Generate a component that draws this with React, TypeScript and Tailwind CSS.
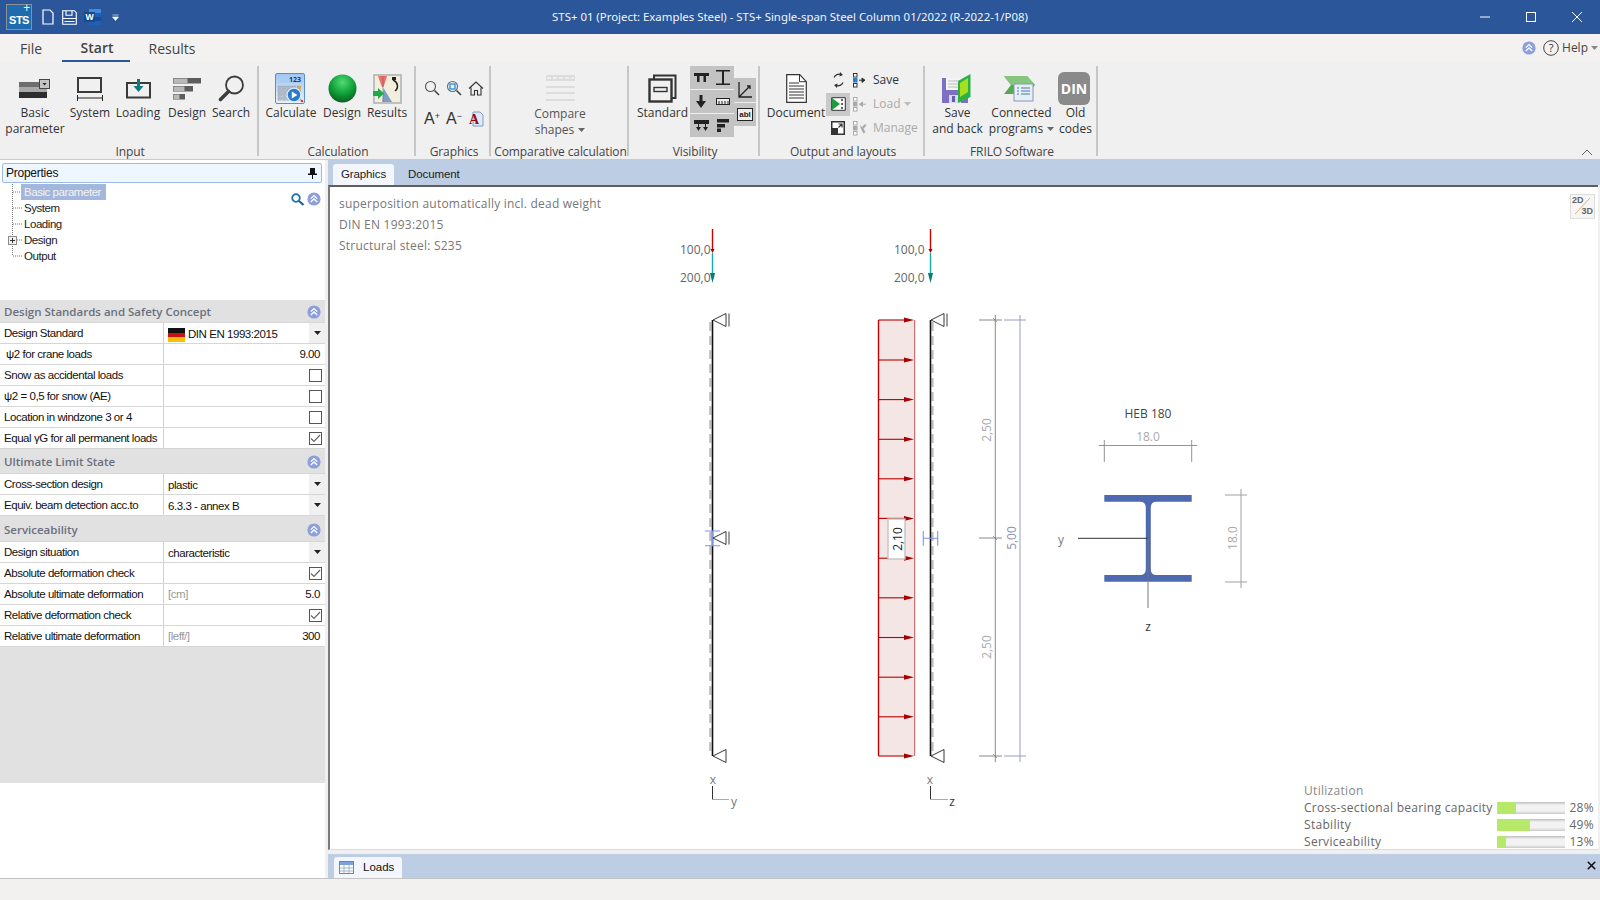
import type { ReactNode } from "react";
import { X } from "lucide-react";

const arrowYs = [320, 360, 399.6, 439.3, 478.8, 518.4, 558.2, 597.8, 637.5, 677.2, 716.8, 756];

function Collapse({ small }: { small?: boolean }) {
  return (
    <svg width={small ? 14 : 15} height={small ? 14 : 15} viewBox="0 0 14 14" className="shrink-0">
      <circle cx="7" cy="7" r="6.6" fill="#8c9fdb" />
      <path d="M3.8 6.6 7 3.6l3.2 3M3.8 10 7 7l3.2 3" fill="none" stroke="#fff" strokeWidth="1.3" />
    </svg>
  );
}

function Caret({ color = "#666" }: { color?: string }) {
  return (
    <svg width="7" height="4" viewBox="0 0 7 4" className="shrink-0">
      <path d="M0 0h7L3.5 4z" fill={color} />
    </svg>
  );
}

function RibbonBtn({ w, icon, children }: { w: number; icon: ReactNode; children: ReactNode }) {
  return (
    <div className="flex flex-col items-center shrink-0" style={{ width: w }}>
      <div className="h-[37px] pt-[4px] flex items-center justify-center">{icon}</div>
      <div className="text-center leading-[16px] whitespace-nowrap">{children}</div>
    </div>
  );
}

function Group({ w, label, children }: { w: number; label: string; children: ReactNode }) {
  return (
    <div className="shrink-0 flex flex-col h-[90px] mt-[4px] border-r-2 border-[#c6c6c6]" style={{ width: w }}>
      <div className="flex h-[79px] shrink-0 pt-[2px]">{children}</div>
      <div className="text-center leading-[14px] pl-[3px] text-[#444] tracking-[-0.1px] whitespace-nowrap">{label}</div>
    </div>
  );
}

function IconBasic() {
  return (
    <svg width="32" height="19" viewBox="0 0 32 19">
      <rect x="0" y="3" width="21" height="5" fill="#6e6e6e" />
      <rect x="0" y="8" width="28" height="5" fill="#a9a9a9" />
      <rect x="0" y="13" width="28" height="6" fill="#2e2e2e" />
      <rect x="20.5" y="0.5" width="10" height="9" fill="#c4c4c4" stroke="#444" />
      <path d="M23.5 4h4l-2 2.5z" fill="#222" />
    </svg>
  );
}

function IconSystem() {
  return (
    <svg width="28" height="24" viewBox="0 0 28 24">
      <rect x="2" y="1" width="23" height="14" fill="none" stroke="#3a3a3a" strokeWidth="2" />
      <path d="M1 21h26M1.5 18v6M26.5 18v6" stroke="#222" fill="none" />
    </svg>
  );
}

function IconLoading() {
  return (
    <svg width="25" height="20" viewBox="0 0 25 20">
      <rect x="1" y="4" width="23" height="14.5" fill="none" stroke="#3a3a3a" strokeWidth="2" />
      <path d="M11 0h3v7h3.5l-5 6-5-6H11z" fill="#0f7a7d" />
    </svg>
  );
}

function IconDesignBars() {
  return (
    <svg width="28" height="22" viewBox="0 0 28 22">
      <rect x="0" y="0" width="28" height="5.5" fill="#5c5c5c" />
      <rect x="0.5" y="0.5" width="14" height="4.5" fill="#b8b8b8" />
      <rect x="0" y="8" width="20" height="5.5" fill="#5c5c5c" />
      <rect x="0.5" y="8.5" width="11" height="4.5" fill="#b8b8b8" />
      <rect x="0" y="16" width="12" height="5.5" fill="#5c5c5c" />
      <rect x="0.5" y="16.5" width="6" height="4.5" fill="#b8b8b8" />
    </svg>
  );
}

function IconSearch() {
  return (
    <svg width="27" height="27" viewBox="0 0 27 27">
      <circle cx="16.5" cy="10" r="8.5" fill="none" stroke="#3d3d3d" strokeWidth="1.8" />
      <path d="M10.5 16.5 2.5 24.5" stroke="#3d3d3d" strokeWidth="3.6" strokeLinecap="round" />
    </svg>
  );
}

function IconCalculate() {
  const keys = [];
  for (let r = 0; r < 4; r++) for (let c = 0; c < 5; c++) keys.push(<rect key={`${r}-${c}`} x={3 + c * 4.8} y={13 + r * 3.8} width="3.6" height="2.8" fill={c === 4 && r < 2 ? "#e6a955" : "#b3bac4"} stroke="#7c8694" strokeWidth="0.3" />);
  return (
    <svg width="30" height="31" viewBox="0 0 30 31">
      <defs>
        <linearGradient id="calcbg" x1="0" y1="0" x2="0" y2="1">
          <stop offset="0" stopColor="#9ec6f0" />
          <stop offset="1" stopColor="#e9f1fa" />
        </linearGradient>
      </defs>
      <rect x="0.5" y="0.5" width="29" height="30" rx="1.5" fill="url(#calcbg)" stroke="#5d8ec8" />
      <rect x="3" y="3" width="24" height="7" fill="#a9cdf2" />
      <text x="26" y="9.3" textAnchor="end" fontSize="7" fontWeight="700" fill="#123a6e">123</text>
      {keys}
      <circle cx="19" cy="22" r="6.8" fill="#2a7ccb" stroke="#d9ecff" strokeWidth="1.2" />
      <path d="M16.8 18.5v7l5.6-3.5z" fill="#fff" />
      <circle cx="27" cy="28" r="1.3" fill="#cf4030" />
    </svg>
  );
}

function IconBall() {
  return (
    <svg width="29" height="29" viewBox="0 0 29 29">
      <defs>
        <radialGradient id="ball" cx="0.5" cy="0.28" r="0.75">
          <stop offset="0" stopColor="#4fdc72" />
          <stop offset="0.55" stopColor="#10a038" />
          <stop offset="1" stopColor="#0a5a22" />
        </radialGradient>
      </defs>
      <circle cx="14.5" cy="14.5" r="14" fill="url(#ball)" />
    </svg>
  );
}

function IconResults() {
  return (
    <svg width="29" height="30" viewBox="0 0 29 30">
      <rect x="1" y="1" width="27" height="28" fill="#f1eedd" stroke="#b3b3b3" strokeWidth="1.6" />
      <path d="M5 2h9l-3.5 11H9z" fill="#f26a6a" />
      <path d="M10.5 14 19 28H9.5z" fill="#7c9cc4" />
      <path d="M10 2v26" stroke="#666" strokeWidth="0.5" />
      <path d="M20 6c5 2 6 8 2 11" fill="none" stroke="#222" strokeWidth="1.5" />
      <path d="M19 3h4v3h-4z" fill="#222" />
      <path d="M0 17h5v-3l6 5.5L5 25v-3H0z" fill="#1eaa4b" />
    </svg>
  );
}

function IconLens({ zoom }: { zoom?: boolean }) {
  return (
    <svg width="16" height="16" viewBox="0 0 16 16">
      <circle cx="6.5" cy="6.5" r="5" fill="none" stroke={zoom ? "#4a6f8c" : "#555"} strokeWidth="1.1" />
      <path d="m10.5 10.5 4.5 4.5" stroke="#444" strokeWidth="1.6" />
      {zoom && <rect x="4" y="4" width="5" height="5" fill="none" stroke="#2a8fd0" strokeWidth="1.3" />}
    </svg>
  );
}

function IconHome() {
  return (
    <svg width="16" height="15" viewBox="0 0 16 15">
      <path d="M1 7.5 8 1l7 6.5M3 6.5V14h3.5V9.5h3V14H13V6.5" fill="none" stroke="#333" strokeWidth="1.1" />
    </svg>
  );
}

function IconFontRed() {
  return (
    <svg width="15" height="16" viewBox="0 0 15 16">
      <path d="M4 1h7l3 3v11H4z" fill="#dfe9f7" stroke="#7d9cc8" />
      <text x="0" y="13" fontSize="14" fontWeight="700" fontFamily="Liberation Serif" fill="#8e1414">A</text>
    </svg>
  );
}

function IconCompare() {
  return (
    <svg width="29" height="26" viewBox="0 0 29 26">
      <rect x="0" y="0" width="29" height="6" fill="#dcdcdc" />
      <path d="M1 3h27" stroke="#fff" strokeDasharray="4 2" />
      <path d="M0 12h29M0 18h29M0 25h29" stroke="#c9c9c9" />
    </svg>
  );
}

function IconStandard() {
  return (
    <svg width="29" height="29" viewBox="0 0 29 29">
      <path d="M6 5V1.5h21.5V24H24" fill="none" stroke="#333" strokeWidth="2" />
      <rect x="1.5" y="5.5" width="22" height="22" fill="none" stroke="#333" strokeWidth="2.4" />
      <rect x="6" y="13.5" width="13" height="4" fill="none" stroke="#333" strokeWidth="1.4" />
    </svg>
  );
}

function VisCell({ children, cls }: { children: ReactNode; cls?: string }) {
  return <div className={`flex-1 flex items-center justify-center ${cls ?? ""}`}>{children}</div>;
}

function IconDocument() {
  return (
    <svg width="21" height="29" viewBox="0 0 21 29">
      <path d="M0.7 0.7h13l6.6 7v20.6H0.7z" fill="#fff" stroke="#333" strokeWidth="1.2" />
      <path d="M13.5 0.7v7h6.8" fill="none" stroke="#333" />
      <path d="M3 9h10M3 12h15M3 15h15M3 18h15M3 21h15M3 24h15" stroke="#333" />
    </svg>
  );
}

function SmallLoadSave({ dis, glyph }: { dis?: boolean; glyph: ReactNode }) {
  const c = dis ? "#a8a8a8" : "#2a80c8";
  return (
    <svg width="15" height="15" viewBox="0 0 15 15" className="shrink-0">
      <rect x="0.5" y="0.5" width="3.5" height="3.5" fill="#fff" stroke={dis ? "#aaa" : "#333"} />
      <rect x="0.5" y="5.5" width="3.5" height="3.5" fill={c} stroke={dis ? "#aaa" : "#2a80c8"} />
      <rect x="0.5" y="10.5" width="3.5" height="3.5" fill="#fff" stroke={dis ? "#aaa" : "#333"} />
      {glyph}
    </svg>
  );
}

function IconSaveBack() {
  return (
    <svg width="29" height="29" viewBox="0 0 29 29">
      <rect x="0" y="4" width="26" height="25" fill="#7d6fc4" />
      <rect x="4" y="4" width="17" height="12" fill="#f4f4f4" />
      <path d="M6 7h12M6 10h12M6 13h12" stroke="#bbb" />
      <rect x="7" y="21" width="12" height="8" fill="#d9d9e8" />
      <rect x="10" y="22" width="3" height="6" fill="#6a5cb0" />
      <path d="M16 7 28.5 0v23L16 29z" fill="#2bb14a" />
      <path d="M18 9 26 4v14l-8 5z" fill="#a8e01e" />
    </svg>
  );
}

function IconConnected() {
  return (
    <svg width="31" height="26" viewBox="0 0 31 26">
      <path d="M0 0h23l8 9-8 9H0l7-9z" fill="#55a854" />
      <path d="M0 0h23l8 9H7z" fill="#86c67f" />
      <rect x="10" y="8" width="19" height="17" fill="#e6eef7" stroke="#8a9bb0" />
      <path d="M13 12h2M17 12h9M13 15h2M17 15h9M13 18h2M17 18h9" stroke="#4d78a8" />
    </svg>
  );
}

function IconWord() {
  return (
    <svg width="17" height="16" viewBox="0 0 17 16">
      <rect x="5" y="0" width="12" height="16" fill="#1f5fb8" />
      <rect x="5" y="0" width="12" height="4" fill="#3c8be0" />
      <rect x="5" y="8" width="12" height="4" fill="#184a9a" />
      <rect x="0" y="3" width="11" height="10" fill="#174a8c" />
      <text x="5.5" y="11" textAnchor="middle" fontSize="8.5" fontWeight="700" fill="#fff">W</text>
    </svg>
  );
}

function Row({ label, children, combo }: { label: ReactNode; children?: ReactNode; combo?: boolean }) {
  return (
    <div className="flex h-[21px] border-b border-[#d6d6d6] text-[#111]">
      <div className="w-[164px] shrink-0 h-full border-r border-[#d0d0d0] pl-[4px] pt-[2px] flex items-center whitespace-nowrap">{label}</div>
      {combo ? (
        <div className="flex-1 h-full flex items-center justify-between pl-[4px]">
          <div className="pt-[4px]">{children}</div>
          <div className="w-[16px] h-full bg-[#f0f0f0] flex items-center justify-center">
            <Caret color="#222" />
          </div>
        </div>
      ) : (
        <div className="flex-1 min-w-0 h-full flex items-center justify-between pl-[4px] pr-[5px]">{children}</div>
      )}
    </div>
  );
}

function Value({ children, muted }: { children: ReactNode; muted?: boolean }) {
  return <span className={muted ? "pt-[2px] text-[#999]" : "pt-[2px] ml-auto"}>{children}</span>;
}

function Check({ on }: { on?: boolean }) {
  return (
    <div className="ml-auto w-[13px] h-[13px] border border-[#555] bg-white -mr-[2px] flex items-center justify-center">
      {on && (
        <svg width="11" height="9" viewBox="0 0 11 9">
          <path d="m1 4.5 3 3 6-6.5" fill="none" stroke="#666" strokeWidth="1.2" />
        </svg>
      )}
    </div>
  );
}

function SectionHead({ title, h }: { title: string; h: number }) {
  return (
    <div className="bg-[#e1e1e1] border-b border-[#d6d6d6] flex items-center justify-between pl-[4px] pr-[4px] pt-[2px] font-['Open_Sans',sans-serif] text-[11.5px] tracking-normal font-semibold text-[#6b7080]" style={{ height: h }}>
      <span>{title}</span>
      <Collapse small />
    </div>
  );
}

function TreeRow({ label, last, plus, sel }: { label: string; last?: boolean; plus?: boolean; sel?: boolean }) {
  return (
    <div className="flex h-[16px] items-center">
      <svg width="22" height="16" viewBox="0 0 22 16" className="shrink-0">
        <path d={last ? "M12.5 0v8M13 8h9" : "M12.5 0v16M13 8h9"} stroke="#777" strokeDasharray="1 1" fill="none" />
        {plus && (
          <g>
            <rect x="8.5" y="4.5" width="8" height="8" fill="#eef0f5" stroke="#8a8a8a" />
            <path d="M10 8.5h5M12.5 6v5" stroke="#333" />
          </g>
        )}
      </svg>
      <span className={sel ? "bg-[#a3b6dc] text-[#f2f2f2] w-[85px] h-[16px] pl-[3px] leading-[16px] -ml-px whitespace-nowrap" : "leading-[16px] pl-[2px] whitespace-nowrap"}>{label}</span>
    </div>
  );
}

function Support({ x, y, bar, h = 13 }: { x: number; y: number; bar?: boolean; h?: number }) {
  return (
    <g fill="none" stroke="#222" strokeWidth="0.9">
      <path d={`M${x} ${y}L${x + h} ${y - h / 2}V${y + h / 2}Z`} fill="#fff" />
      {bar && <path d={`M${x + 16} ${y - h / 2}v${h}`} stroke="#777" strokeWidth="1.4" />}
    </g>
  );
}

function Drawing() {
  return (
    <svg width="1268" height="663" viewBox="330 187 1268 663" className="absolute left-0 top-0 font-['Open_Sans',sans-serif]">
      <g fontSize="12" fill="#666">
        <text x="680" y="254">100,0</text>
        <text x="680" y="282">200,0</text>
        <text x="894" y="254">100,0</text>
        <text x="894" y="282">200,0</text>
      </g>
      {[712.5, 930.5].map((x) => (
        <g key={x}>
          <path d={`M${x} 229v22`} stroke="#c80000" strokeWidth="1.4" />
          <path d={`M${x - 2} 249h4l-2 4z`} fill="#a00000" />
          <path d={`M${x} 253v20`} stroke="#14b0b0" strokeWidth="1.4" />
          <path d={`M${x - 2.6} 273h5.2l-2.6 10z`} fill="#0a7a7a" />
        </g>
      ))}

      <path d="M710.3 322V756" stroke="#bdbdbd" strokeWidth="2.2" strokeDasharray="9 5" />
      <path d="M712.5 320V756" stroke="#111" strokeWidth="1.6" />
      <Support x={713} y={320} bar />
      <Support x={713} y={538} bar />
      <Support x={713} y={756} />
      <path d="M705 531h15M705 545.7h15M712.5 531v14.7" stroke="#7d94e6" strokeWidth="1.1" fill="none" />

      <rect x="878.5" y="320" width="36" height="436" fill="#f3e6e5" />
      <path d="M878.5 320V756" stroke="#c00000" strokeWidth="1.4" />
      <path d="M914.7 320V756" stroke="#c05555" strokeWidth="1" />
      {arrowYs.map((y) => (
        <g key={y}>
          <path d={`M878.5 ${y}H906`} stroke="#b80000" strokeWidth="1.1" />
          <path d={`M904 ${y - 2.5}L914 ${y}L904 ${y + 2.5}Z`} fill="#a80000" />
        </g>
      ))}
      <rect x="888" y="519" width="17" height="40" fill="#fff" stroke="#c4c4c4" strokeWidth="1.4" />
      <text transform="translate(901.5 539) rotate(-90)" textAnchor="middle" fontSize="12" fill="#222">2,10</text>

      <path d="M932.5 322V756" stroke="#bdbdbd" strokeWidth="2.2" strokeDasharray="9 5" />
      <path d="M930.5 320V756" stroke="#111" strokeWidth="1.6" />
      <Support x={931} y={320} bar />
      <Support x={931} y={756} />
      <path d="M923.3 531v14.7M937.7 531v14.7M923.3 538.3h14.4" stroke="#7d94e6" strokeWidth="1.1" fill="none" />

      <g stroke="#7a7a7a" strokeWidth="0.9" fill="none">
        <path d="M995.3 315V762M979 320h23M979 538h23M979 756h23" />
        <path d="M993 318l4 4M993 536l4 4M993 754l4 4" strokeWidth="0.7" />
      </g>
      <g stroke="#9c9cc4" strokeWidth="1" fill="none">
        <path d="M1020 315V762M1004 320h22M1004 756h22" />
      </g>
      <g fontSize="12" fill="#a8a8a8" textAnchor="middle">
        <text transform="translate(991 430) rotate(-90)">2,50</text>
        <text transform="translate(991 647) rotate(-90)">2,50</text>
      </g>
      <text transform="translate(1016 538) rotate(-90)" textAnchor="middle" fontSize="12" fill="#8f8fb0">5,00</text>

      <g fill="none" strokeWidth="1">
        <path d="M712.5 786v13.5" stroke="#333" />
        <path d="M712.5 799.5H729" stroke="#aaa" />
        <path d="M930.5 786v13.5" stroke="#333" />
        <path d="M930.5 799.5H948" stroke="#aaa" />
      </g>
      <g fontSize="12" fill="#777" textAnchor="middle">
        <text x="713" y="784">x</text>
        <text x="734" y="806">y</text>
        <text x="930" y="784">x</text>
      </g>
      <text x="952" y="806" fontSize="12" textAnchor="middle" fill="#333">z</text>

      <text x="1148" y="418" fontSize="12" textAnchor="middle" fill="#444">HEB 180</text>
      <text x="1148" y="441" fontSize="12" textAnchor="middle" fill="#aaa">18.0</text>
      <path d="M1099 445.5h98M1104.3 440v22M1191.7 440v22" stroke="#888" strokeWidth="0.9" fill="none" />
      <path
        d="M1104.3 495H1191.7V501.7H1156.5Q1150.8 501.7 1150.8 507.5V569.2Q1150.8 575 1156.5 575H1191.7V581.8H1104.3V575H1140Q1145.8 575 1145.8 569.2V507.5Q1145.8 501.7 1140 501.7H1104.3Z"
        fill="#4f69b1"
      />
      <path d="M1078 538.3h70" stroke="#333" strokeWidth="1" />
      <path d="M1148 538.3V608" stroke="#777" strokeWidth="1" />
      <text x="1061" y="544" fontSize="12" textAnchor="middle" fill="#777">y</text>
      <text x="1148" y="631" fontSize="12" textAnchor="middle" fill="#333">z</text>
      <path d="M1241 489V588M1225 495h22M1225 582h22" stroke="#a0a0a0" strokeWidth="1" fill="none" />
      <text transform="translate(1237 538) rotate(-90)" textAnchor="middle" fontSize="12" fill="#aaa">18.0</text>
    </svg>
  );
}

function UtilRow({ label, pct }: { label: string; pct: number }) {
  return (
    <div className="flex items-center h-[17px] leading-[17px]">
      <span className="w-[193px] shrink-0 whitespace-nowrap">{label}</span>
      <div className="w-[68px] h-[12px] shrink-0 bg-[linear-gradient(#bdbdbd,#f2f2f2_25%,#f2f2f2_75%,#c8c8c8)]">
        <div className="h-full bg-[#b6e86a]" style={{ width: `${pct}%` }} />
      </div>
      <span className="flex-1 text-right">{pct}%</span>
    </div>
  );
}

export default function App() {
  return (
    <div className="w-[1600px] h-[900px] overflow-hidden flex flex-col bg-[#f0f0f0] font-['Open_Sans',sans-serif] text-[12px] text-[#333]">
      <div className="h-[34px] shrink-0 bg-[#2b579a] flex items-center text-white">
        <div className="w-[300px] shrink-0 flex items-center pl-[6px]">
          <div className="relative w-[26px] h-[26px] bg-[#1e6cae] border border-[#8a8f99] flex items-end justify-center">
            <span className="font-['Liberation_Sans',sans-serif] font-bold text-[11px] leading-[11px] tracking-[-0.5px] mb-[3px]">STS</span>
            <span className="absolute right-[1px] -top-[2px] text-[12px] leading-[9px]">+</span>
          </div>
          <svg width="12" height="16" viewBox="0 0 12 16" className="ml-[10px]">
            <path d="M1 1h7l3 3v11H1z" fill="none" stroke="#fff" strokeWidth="1.2" />
          </svg>
          <svg width="15" height="15" viewBox="0 0 15 15" className="ml-[8px]">
            <path d="M.7.7h11.6l2 2v11.6H.7zM4 .7v4.5h6V.7M.7 8.5h13.6M2.5 11.5h10" fill="none" stroke="#fff" strokeWidth="1.1" />
          </svg>
          <div className="ml-[7px]">
            <IconWord />
          </div>
          <svg width="7" height="7" viewBox="0 0 7 7" className="ml-[11px]">
            <path d="M.5 1h6M.5 3h6L3.5 6.5z" fill="#fff" stroke="#fff" strokeWidth="0.6" />
          </svg>
        </div>
        <div className="flex-1 text-center font-['Noto_Sans',sans-serif] text-[11.4px] text-[#f0f4fa] whitespace-nowrap">
          STS+ 01 (Project: Examples Steel) - STS+ Single-span Steel Column 01/2022 (R-2022-1/P08)
        </div>
        <div className="w-[320px] shrink-0 flex justify-end items-center pr-[18px] gap-[36px]">
          <svg width="10" height="10" viewBox="0 0 10 10">
            <path d="M0 5h10" stroke="#fff" />
          </svg>
          <svg width="10" height="10" viewBox="0 0 10 10">
            <rect x="0.5" y="0.5" width="9" height="9" fill="none" stroke="#fff" />
          </svg>
          <svg width="10" height="10" viewBox="0 0 10 10">
            <path d="m0 0 10 10M10 0 0 10" stroke="#fff" />
          </svg>
        </div>
      </div>

      <div className="h-[126px] shrink-0 bg-[#f0f0f0] border-b border-[#c9c9c9] flex flex-col relative">
        <div className="h-[28px] shrink-0 flex items-end text-[14px] text-[#444] bg-[#f3f2f1]">
          <div className="w-[62px] h-full flex items-center justify-center">File</div>
          <div className="w-[68px] h-full flex items-center justify-center pl-[2px] font-semibold border-b-2 border-[#2b579a] text-[#444]">Start</div>
          <div className="w-[84px] h-full flex items-center justify-center">Results</div>
          <div className="flex-1" />
          <div className="flex items-center pr-[2px] h-full text-[12px]">
            <Collapse small />
            <svg width="16" height="16" viewBox="0 0 16 16" className="ml-[7px]">
              <circle cx="8" cy="8" r="7.3" fill="none" stroke="#444" />
              <text x="8" y="12" fontSize="11" textAnchor="middle" fill="#333">?</text>
            </svg>
            <span className="ml-[3px] mr-[3px] text-[#444]">Help</span>
            <Caret color="#888" />
          </div>
        </div>
        <div className="flex">
          <Group w={259} label="Input">
            <RibbonBtn w={70} icon={<IconBasic />}>Basic<br />parameter</RibbonBtn>
            <RibbonBtn w={40} icon={<IconSystem />}>System</RibbonBtn>
            <RibbonBtn w={56} icon={<IconLoading />}>Loading</RibbonBtn>
            <RibbonBtn w={42} icon={<IconDesignBars />}>Design</RibbonBtn>
            <RibbonBtn w={46} icon={<IconSearch />}>Search</RibbonBtn>
          </Group>
          <Group w={157} label="Calculation">
            <RibbonBtn w={61} icon={<IconCalculate />}><span className="pl-[3px]">Calculate</span></RibbonBtn>
            <RibbonBtn w={44} icon={<IconBall />}><span>Design</span></RibbonBtn>
            <RibbonBtn w={46} icon={<IconResults />}>Results</RibbonBtn>
          </Group>
          <Group w={75} label="Graphics">
            <div className="grid grid-cols-3 w-[66px] ml-[5px] h-[64px] place-items-center content-start gap-y-[15px] pt-[12px] text-[#333] font-['Liberation_Sans',sans-serif]">
              <IconLens />
              <IconLens zoom />
              <IconHome />
              <span className="text-[16px] leading-[16px]">A<sup className="text-[9px] -top-[5px]">+</sup></span>
              <span className="text-[16px] leading-[16px]">A<sup className="text-[9px] -top-[5px]">−</sup></span>
              <IconFontRed />
            </div>
          </Group>
          <Group w={138} label="Comparative calculation">
            <div className="w-full flex flex-col items-center text-[#555] leading-[16px] pl-[2px]">
              <div className="h-[38px] pt-[2px] flex items-center"><IconCompare /></div>
              <div>Compare</div>
              <div className="flex items-center gap-[4px]">shapes <Caret /></div>
            </div>
          </Group>
          <Group w={131} label="Visibility">
            <div className="w-[61px] pl-[6px] flex shrink-0">
              <RibbonBtn w={55} icon={<IconStandard />}>Standard</RibbonBtn>
            </div>
            <div className="w-[44px] h-[71px] bg-[#c3c3c3] flex flex-col -mt-[2px] shrink-0">
              <div className="flex-1 flex border-b border-[#eee]">
                <VisCell>
                  <svg width="15" height="11" viewBox="0 0 15 11"><path d="M0 1h15v3H12v6H9.500V4H5.500v6H3V4H0z" fill="#222" /></svg>
                </VisCell>
                <VisCell>
                  <svg width="14" height="15" viewBox="0 0 14 15"><path d="M0 .5h14M0 14.5h14M7 1v13" stroke="#222" strokeWidth="2" fill="none" /></svg>
                </VisCell>
              </div>
              <div className="flex-1 flex border-b border-[#eee]">
                <VisCell>
                  <svg width="10" height="13" viewBox="0 0 10 13"><path d="M3.500 0h3v6H10l-5 7-5-7h3.500z" fill="#222" /></svg>
                </VisCell>
                <VisCell>
                  <svg width="14" height="7" viewBox="0 0 14 7"><rect x="0.5" y="0.5" width="13" height="6" fill="#eee" stroke="#222" /><path d="M3 3v4M6 3v4M9 3v4M12 3v4" stroke="#222" /></svg>
                </VisCell>
              </div>
              <div className="flex-1 flex">
                <VisCell>
                  <svg width="15" height="13" viewBox="0 0 15 13"><path d="M0 1h15v4H0z" fill="#222" /><path d="M4 5v3H2l2.500 4L7 8H5V5zM11 5v3H9l2.500 4L14 8h-2V5z" fill="#222" /></svg>
                </VisCell>
                <VisCell>
                  <svg width="12" height="13" viewBox="0 0 12 13"><path d="M0 0h12v3.500H0zM0 5h8v3.500H0zM0 9.500h4V13H0z" fill="#222" /></svg>
                </VisCell>
              </div>
            </div>
            <div className="w-[22px] h-[48px] bg-[#c3c3c3] flex flex-col mt-[10px] shrink-0">
              <VisCell cls="border-b border-[#eee]">
                <svg width="14" height="16" viewBox="0 0 14 16"><path d="M1 0v15h13M1 15 12 4M9 4h3v3" stroke="#222" strokeWidth="1.3" fill="none" /></svg>
              </VisCell>
              <VisCell>
                <div className="w-[16px] h-[13px] border border-[#222] bg-[#eee] text-[8px] leading-[11px] font-bold text-center font-['Liberation_Sans',sans-serif] text-[#222]">abl</div>
              </VisCell>
            </div>
          </Group>
          <Group w={165} label="Output and layouts">
            <div className="w-[66px] pl-[6px] flex shrink-0">
              <RibbonBtn w={60} icon={<IconDocument />}>Document</RibbonBtn>
            </div>
            <div className="flex flex-col">
              <div className="h-[24px] flex items-center">
                <div className="w-[24px] flex justify-center">
                  <svg width="13" height="16" viewBox="0 0 13 16"><path d="M2 5.500A5.500 5.500 0 0 1 9 2.600M11 10.500A5.500 5.500 0 0 1 4 13.400" fill="none" stroke="#333" strokeWidth="1.2" /><path d="M8 0l3 3-3.500 1.500zM5 16l-3-3 3.500-1.500z" fill="#333" /></svg>
                </div>
                <div className="ml-[3px]">
                  <SmallLoadSave glyph={<path d="M6 7.200h5M9 5l3 2.200-3 2.200z" fill="#333" stroke="#333" />} />
                </div>
                <span className="ml-[5px]">Save</span>
              </div>
              <div className="h-[24px] flex items-center">
                <div className="w-[24px] h-[23px] bg-[#c9c9c9] flex justify-center items-center">
                  <svg width="15" height="14" viewBox="0 0 15 14"><path d="M.7 .7h13.600v12.600H.7z" fill="#fff" stroke="#333" /><path d="M1 1l8 6-8 6z" fill="#1f9a3d" /><path d="M11 2v2M11 6v2M11 10v2" stroke="#333" strokeWidth="1.500" /></svg>
                </div>
                <div className="ml-[3px]">
                  <SmallLoadSave dis glyph={<path d="M7 7.200h6M9.500 5 6.500 7.200l3 2.200z" fill="#aaa" stroke="#aaa" />} />
                </div>
                <span className="ml-[5px] text-[#aaa] mr-[3px]">Load</span>
                <Caret color="#bbb" />
              </div>
              <div className="h-[24px] flex items-center">
                <div className="w-[24px] flex justify-center">
                  <svg width="14" height="14" viewBox="0 0 14 14"><rect x="0" y="0" width="14" height="14" fill="#333" /><rect x="1.500" y="1.500" width="11" height="11" fill="#fff" /><rect x="0" y="7" width="7" height="7" fill="#333" /><path d="M7.500 6.500 11 3M7.500 3H11v3.500" stroke="#333" strokeWidth="1.200" fill="none" /></svg>
                </div>
                <div className="ml-[3px]">
                  <SmallLoadSave dis glyph={<path d="M7 4l2 2 3-3 1.500 1.500-3 3 2 4-2 1-2.500-4.500z" fill="#aaa" />} />
                </div>
                <span className="ml-[5px] text-[#aaa]">Manage</span>
              </div>
            </div>
          </Group>
          <Group w={173} label="FRILO Software">
            <RibbonBtn w={62} icon={<IconSaveBack />}><div className="pl-[3px]">Save<br />and back</div></RibbonBtn>
            <RibbonBtn w={64} icon={<IconConnected />}><div className="pl-[5px]">Connected<br /><span className="inline-flex items-center gap-[4px]">programs <Caret /></span></div></RibbonBtn>
            <div className="pl-[3px] flex shrink-0">
              <RibbonBtn w={40} icon={<div className="w-[32px] h-[33px] rounded-[6px] bg-[#8a8a8a] text-white text-[14px] font-bold flex items-center justify-center">DIN</div>}><div className="pl-[3px]">Old<br />codes</div></RibbonBtn>
            </div>
          </Group>
          <div className="flex-1" />
        </div>
        <svg width="12" height="7" viewBox="0 0 12 7" className="absolute right-[7px] bottom-[3px]">
          <path d="M1 6 6 1l5 5" fill="none" stroke="#666" />
        </svg>
      </div>

      <div className="flex-1 min-h-0 flex">
        <div className="w-[325px] shrink-0 bg-white flex flex-col font-['Liberation_Sans',sans-serif] text-[11.5px] tracking-[-0.45px]">
          <div className="pt-[3px] pl-[2px] pr-[3px] pb-[1px] bg-white">
            <div className="h-[20px] border border-[#9dbbe8] rounded-[2px] bg-[#eef6ff] flex items-center justify-between px-[3px] text-[#111] text-[12px] tracking-[-0.25px]">
              <span>Properties</span>
              <svg width="9" height="11" viewBox="0 0 9 11" className="mr-[1px]"><path d="M2 0h5v5.500h2V7H5v4H4V7H0V5.500h2z" fill="#111" /></svg>
            </div>
          </div>
          <div className="relative h-[116px] text-[#222]">
            <TreeRow label="Basic parameter" sel />
            <TreeRow label="System" />
            <TreeRow label="Loading" />
            <TreeRow label="Design" plus />
            <TreeRow label="Output" last />
            <div className="absolute right-[4px] top-[8px] flex items-center gap-[2px]">
              <svg width="14" height="13" viewBox="0 0 14 13"><circle cx="5" cy="5" r="3.800" fill="none" stroke="#1f6fa8" strokeWidth="1.800" /><path d="m8 8 4.500 4" stroke="#1f5f90" strokeWidth="2.200" /></svg>
              <Collapse small />
            </div>
          </div>
          <SectionHead title="Design Standards and Safety Concept" h={23} />
          <Row label="Design Standard" combo>
            <div className="flex items-center">
              <div className="w-[17px] h-[14px] bg-[linear-gradient(#111_33%,#d01010_33%,#d01010_66%,#f5c000_66%)] mr-[3px]" />
              DIN EN 1993:2015
            </div>
          </Row>
          <Row label={<span className="pl-[2px]">ψ2 for crane loads</span>}>
            <Value>9.00</Value>
          </Row>
          <Row label="Snow as accidental loads"><Check /></Row>
          <Row label="ψ2 = 0,5 for snow (AE)"><Check /></Row>
          <Row label="Location in windzone 3 or 4"><Check /></Row>
          <Row label="Equal γG for all permanent loads"><Check on /></Row>
          <SectionHead title="Ultimate Limit State" h={25} />
          <Row label="Cross-section design" combo>plastic</Row>
          <Row label="Equiv. beam detection acc.to" combo>6.3.3 - annex B</Row>
          <SectionHead title="Serviceability" h={26} />
          <Row label="Design situation" combo>characteristic</Row>
          <Row label="Absolute deformation check"><Check on /></Row>
          <Row label="Absolute ultimate deformation">
            <Value muted>[cm]</Value>
            <Value>5.0</Value>
          </Row>
          <Row label="Relative deformation check"><Check on /></Row>
          <Row label="Relative ultimate deformation">
            <Value muted>[leff/]</Value>
            <Value>300</Value>
          </Row>
          <div className="h-[136px] bg-[#e1e1e1]" />
          <div className="flex-1 bg-white" />
        </div>

        <div className="flex-1 min-w-0 flex flex-col pl-[3px]">
          <div className="h-[25px] shrink-0 bg-[#bccde4] flex items-end pl-[5px] text-[#222] font-['Liberation_Sans',sans-serif] text-[11.5px] tracking-[-0.1px]">
            <div className="w-[61px] h-[21px] bg-[#f3f7fd] rounded-t-[3px] flex items-center justify-center">Graphics</div>
            <div className="ml-[14px] h-[21px] flex items-center">Document</div>
          </div>
          <div className="relative h-[665px] shrink-0 mr-[2px] bg-white border-t-2 border-l-2 border-t-[#5f5f5f] border-l-[#7a7a7a] border-b border-b-[#dcdcdc]">
            <Drawing />
            <div className="relative pl-[9px] pt-[6px] text-[#777] tracking-[0.22px] leading-[21px]">
              <div>superposition automatically incl. dead weight</div>
              <div>DIN EN 1993:2015</div>
              <div>Structural steel: S235</div>
            </div>
            <div className="absolute right-[3px] top-[7px] w-[25px] h-[25px] border border-[#ddd] bg-[#f6f6f6] text-[9px] font-bold leading-[11px] text-[#666] font-['Liberation_Sans',sans-serif]">
              <div className="pl-[1px]">2D</div>
              <div className="text-right pr-[1px]">3D</div>
              <svg width="23" height="23" viewBox="0 0 23 23" className="absolute left-0 top-0"><path d="M19 3 4 19" stroke="#f0b060" /></svg>
            </div>
            <div className="absolute left-[974px] top-[595px] w-[290px] text-[#666] tracking-[0.3px]">
              <div className="h-[17px] leading-[17px] text-[#888]">Utilization</div>
              <UtilRow label="Cross-sectional bearing capacity" pct={28} />
              <UtilRow label="Stability" pct={49} />
              <UtilRow label="Serviceability" pct={13} />
            </div>
          </div>
          <div className="h-[4px] shrink-0" />
          <div className="h-[24px] shrink-0 bg-[#bccde4] flex items-end pl-[6px] pr-[2px] justify-between">
            <div className="w-[68px] h-[21px] bg-[#f3f7fd] rounded-t-[3px] flex items-center pl-[5px] text-[#111] font-['Liberation_Sans',sans-serif] text-[11.5px]">
              <svg width="15" height="13" viewBox="0 0 15 13" className="mr-[9px]"><rect x="0.5" y="0.5" width="14" height="12" fill="#fff" stroke="#6f86ad" /><rect x="1" y="1" width="13" height="3" fill="#7aa0e0" /><path d="M1 7h13M1 10h13M5 4v8M10 4v8" stroke="#a8b4c8" /></svg>
              Loads
            </div>
            <X size={13} strokeWidth={3} className="text-[#111] mb-[6px]" />
          </div>
        </div>
      </div>

      <div className="h-[22px] shrink-0 bg-[#f2f1f0] border-t border-[#c4c4c4]" />
    </div>
  );
}
